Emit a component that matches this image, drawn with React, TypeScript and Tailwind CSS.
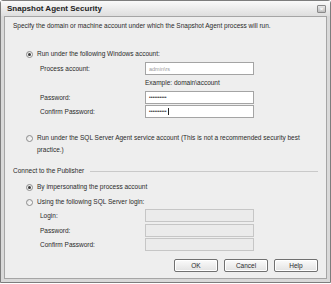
import type { FC, ReactNode } from "react";

// ─── SMALL PIECES ────────────────────────────────────────────────────────────

const Radio: FC<{ checked?: boolean }> = ({ checked }) => (
  <span className="flex items-center justify-center w-[7px] h-[7px] rounded-full border border-[#8c8c8c] bg-gradient-to-br from-[#e2e2e2] to-white shrink-0">
    {checked && <span className="w-[3px] h-[3px] rounded-full bg-[#3c3c3c]" />}
  </span>
);

const TextBox: FC<{ disabled?: boolean; children?: ReactNode }> = ({ disabled, children }) => (
  <div
    className={`flex items-center w-[109px] h-[13px] px-[3px] border ${
      disabled ? "bg-[#ebebeb] border-[#c6c6c6]" : "bg-white border-[#a4a4a4]"
    }`}
  >
    {children}
  </div>
);

const FieldRow: FC<{ label: string; mt: string; disabled?: boolean; children?: ReactNode }> = ({
  label,
  mt,
  disabled,
  children,
}) => (
  <div className={`flex items-center h-[13px] ${mt}`}>
    <span className="w-[140px] pl-[35px] shrink-0 whitespace-nowrap">{label}</span>
    <TextBox disabled={disabled}>{children}</TextBox>
  </div>
);

const Dots: FC<{ caret?: boolean }> = ({ caret }) => (
  <span className="flex items-center text-[5px] leading-none tracking-[0px] text-[#333]">
    ••••••••••
    {caret && <span className="ml-[1px] w-px h-[7px] bg-[#222]" />}
  </span>
);

const Button: FC<{ label: string }> = ({ label }) => (
  <div className="flex items-center justify-center w-[44px] h-[13px] rounded-[2px] border border-[#707070] bg-gradient-to-b from-[#fbfbfb] to-[#e3e3e3] shadow-[inset_0_0_0_1px_#fff]">
    {label}
  </div>
);

// ─── DIALOG ──────────────────────────────────────────────────────────────────

export default function App() {
  return (
    <div
      className="w-[331px] h-[284px] bg-white text-[6.5px] leading-[10px] text-[#2a2a2a]"
      style={{ fontFamily: '"Liberation Sans", Arial, sans-serif' }}
    >
      <div className="flex flex-col w-[331px] h-[283px] border border-[#7d7d7d] rounded-t-[3px] bg-[#d9d9d9]">
        {/* title bar */}
        <div className="flex items-center justify-between h-[15px] pl-[6px] pr-[4px] bg-gradient-to-b from-[#fafafa] to-[#dedede]">
          <span className="text-[8px] font-bold text-[#1e1e1e] leading-none">Snapshot Agent Security</span>
          <span className="flex items-center justify-center w-[9px] h-[8px] border border-[#8a8a8a] rounded-[1px] bg-gradient-to-b from-[#e8e8e8] to-[#bdbdbd] text-[6px] leading-none text-white font-bold">
            ×
          </span>
        </div>

        {/* client area */}
        <div className="flex-1 mx-[3px] mb-[3px] border border-[#a5a5a5] bg-[#eeeeee] flex flex-col">
          <div className="mt-[4px] pl-[8px] h-[10px] whitespace-nowrap">
            Specify the domain or machine account under which the Snapshot Agent process will run.
          </div>

          <div className="mt-[18px] flex items-center gap-[4px] pl-[21px] h-[10px]">
            <Radio checked />
            <span>Run under the following Windows account:</span>
          </div>

          <FieldRow label="Process account:" mt="mt-[3px]">
            <span className="text-[5.5px] text-[#9a9a9a]">admin\rs</span>
          </FieldRow>

          <div className="mt-[3px] h-[10px] pl-[140px]">Example: domain\account</div>

          <FieldRow label="Password:" mt="mt-[3px]">
            <Dots />
          </FieldRow>
          <FieldRow label="Confirm Password:" mt="mt-[1px]">
            <Dots caret />
          </FieldRow>

          <div className="mt-[14px] flex items-start gap-[4px] pl-[21px] leading-[12px]">
            <span className="mt-[2.5px]">
              <Radio />
            </span>
            <span className="w-[270px]">
              Run under the SQL Server Agent service account (This is not a recommended security best
              practice.)
            </span>
          </div>

          <div className="mt-[10px] flex items-center gap-[6px] pl-[8px] pr-[8px] h-[10px]">
            <span className="whitespace-nowrap">Connect to the Publisher</span>
            <span className="flex-1 h-px bg-[#c9c9c9]" />
          </div>

          <div className="mt-[6px] flex items-center gap-[4px] pl-[21px] h-[10px]">
            <Radio checked />
            <span>By impersonating the process account</span>
          </div>
          <div className="mt-[5px] flex items-center gap-[4px] pl-[21px] h-[10px]">
            <Radio />
            <span>Using the following SQL Server login:</span>
          </div>

          <FieldRow label="Login:" mt="mt-[2px]" disabled />
          <FieldRow label="Password:" mt="mt-[2px]" disabled />
          <FieldRow label="Confirm Password:" mt="mt-[1px]" disabled />

          <div className="mt-[8px] flex justify-end gap-[6px] pr-[8px]">
            <Button label="OK" />
            <Button label="Cancel" />
            <Button label="Help" />
          </div>
        </div>
      </div>
    </div>
  );
}
